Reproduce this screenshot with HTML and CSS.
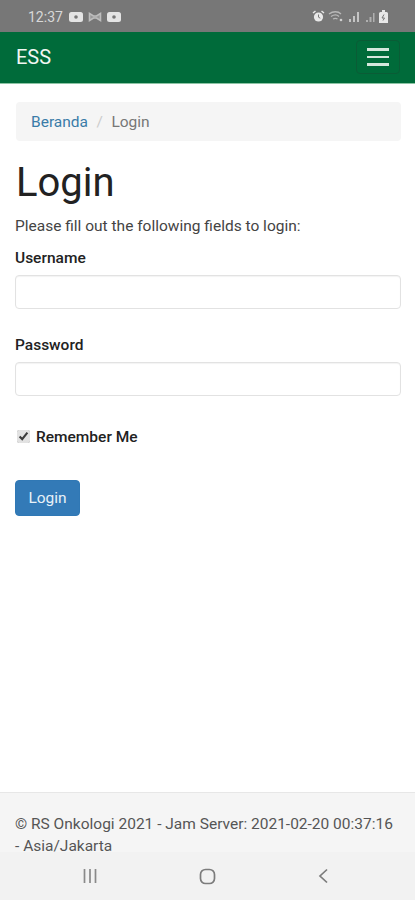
FILE: index.html
```html
<!DOCTYPE html>
<html lang="en">
<head>
    <meta charset="UTF-8">
    <meta name="viewport" content="width=device-width, initial-scale=1.0">
    <title>Login</title>
    <link rel="stylesheet" href="styles.css">
</head>
<body>

<div class="status-bar">
    <div class="status-left">
        <span class="status-time">12:37</span>
        <svg class="status-icon" width="14" height="10" viewBox="0 0 14 10"><rect width="14" height="10" rx="2.5" fill="#e4e4e4"/><circle cx="7" cy="5" r="1.8" fill="#777"/></svg>
        <svg class="status-icon" width="14" height="10" viewBox="0 0 14 10"><path d="M1.500 1.500v7l4-2.500h3l4 2.500v-7l-4 2.500h-3z" fill="#999" stroke="#bdbdbd" stroke-width="1.600"/></svg>
        <svg class="status-icon" width="14" height="10" viewBox="0 0 14 10"><rect width="14" height="10" rx="2.5" fill="#e4e4e4"/><circle cx="7" cy="5" r="1.8" fill="#777"/></svg>
    </div>
    <div class="status-right">
        <svg width="13" height="13" viewBox="0 0 13 13"><circle cx="6.5" cy="7" r="4.6" fill="#e8e8e8"/><path d="M6.5 4.500v2.700l1.800 1" fill="none" stroke="#777" stroke-width="1"/><path d="M1 3l2.500-2M12 3l-2.500-2" stroke="#e8e8e8" stroke-width="1.500"/></svg>
        <svg width="17" height="11" viewBox="0 0 17 11"><path d="M1 3c4-3 9-3 12 0M3 5.500c3-2 6-2 8 0M5 8c2-1 3-1 4.500 0" fill="none" stroke="#b9b9b9" stroke-width="1.300"/><circle cx="13" cy="9" r="1.300" fill="#cfcfcf"/></svg>
        <svg width="14" height="11" viewBox="0 0 14 11"><path d="M1 8h2v3H1zM5 5h2v6H5zM9 1h2v10H9z" fill="#c4c4c4"/></svg>
        <svg width="11" height="11" viewBox="0 0 11 11"><path d="M1 9h2v2H1zM4.500 6h2v5h-2zM8 2h1.500v9H8z" fill="#b0b0b0"/></svg>
        <svg width="9" height="13" viewBox="0 0 9 13"><path d="M3 0h3v2h1.500A1.500 1.500 0 0 1 9 3.500V13H0V3.500A1.500 1.500 0 0 1 1.500 2H3z" fill="#e8e8e8"/><path d="M5 4.500 3 8h2.500L4 10.500" fill="none" stroke="#777" stroke-width="1"/></svg>
    </div>
</div>

<nav class="navbar">
    <a class="navbar-brand" href="#">ESS</a>
    <button class="navbar-toggle" type="button" aria-label="Toggle navigation">
        <span class="icon-bar"></span>
        <span class="icon-bar"></span>
        <span class="icon-bar"></span>
    </button>
</nav>

<main class="container">
    <ul class="breadcrumb">
        <li><a href="#">Beranda</a></li>
        <li class="crumb-sep">/</li>
        <li class="crumb-active">Login</li>
    </ul>

    <h1>Login</h1>
    <p class="intro">Please fill out the following fields to login:</p>

    <form>
        <div class="form-group">
            <label for="username">Username</label>
            <input type="text" id="username" class="form-control">
        </div>
        <div class="form-group">
            <label for="password">Password</label>
            <input type="password" id="password" class="form-control">
        </div>
        <label class="check-label">
            <input type="checkbox" class="check-box" checked>
            Remember Me
        </label>
        <button type="button" class="btn-login">Login</button>
    </form>
</main>

<footer class="footer">
    <p>© RS Onkologi 2021 - Jam Server: 2021-02-20 00:37:16 - Asia/Jakarta</p>
</footer>

<div class="system-nav">
    <svg width="16" height="16" viewBox="0 0 16 16"><path d="M2.500 1v14M8 1v14M13.500 1v14" stroke="#8a8a8a" stroke-width="1.700" fill="none"/></svg>
    <svg width="17" height="17" viewBox="0 0 17 17"><rect x="1.500" y="1.500" width="14" height="14" rx="5" fill="none" stroke="#7c7c7c" stroke-width="1.700"/></svg>
    <svg width="12" height="16" viewBox="0 0 12 16"><path d="M10 1.500 3 8l7 6.500" fill="none" stroke="#7c7c7c" stroke-width="1.700"/></svg>
</div>

</body>
</html>
```

FILE: styles.css
```css
* {
    box-sizing: border-box;
}
body {
    margin: 0;
    height: 900px;
    display: flex;
    flex-direction: column;
    overflow: hidden;
    font-family: Roboto, "Liberation Sans", sans-serif;
    font-size: 15.5px;
    color: #333;
    background-color: #fff;
}
.status-bar {
    height: 32px;
    flex: none;
    display: flex;
    justify-content: space-between;
    align-items: center;
    padding: 1px 27px 0 28px;
    background-color: #777;
    color: #d8d8d8;
}
.status-left, .status-right {
    display: flex;
    align-items: center;
}
.status-left {
    gap: 5px;
}
.status-right {
    gap: 3px;
}
.status-time {
    font-size: 14px;
    margin-right: 1px;
}
.navbar {
    height: 52px;
    flex: none;
    display: flex;
    justify-content: space-between;
    align-items: center;
    padding: 0 15px 1px 16px;
    background-color: #006b3a;
    border-bottom: 1px solid #8cc4a4;
}
.navbar-brand {
    color: #f0f7f2;
    font-size: 20px;
    text-decoration: none;
}
.navbar-toggle {
    width: 44px;
    height: 34px;
    display: flex;
    flex-direction: column;
    justify-content: center;
    align-items: center;
    gap: 5px;
    padding: 0;
    background: none;
    border: 1px solid #0a5c36;
    border-radius: 4px;
}
.icon-bar {
    width: 22px;
    height: 2.5px;
    background-color: #d5e7dc;
}
.container {
    flex: 1;
    padding: 18px 14px 0 15px;
}
.breadcrumb {
    height: 39px;
    display: flex;
    align-items: center;
    margin: 0 0 0 1px;
    padding: 0 15px;
    list-style: none;
    background-color: #f5f5f5;
    border-radius: 4px;
}
.breadcrumb a {
    color: #3a7ca8;
    text-decoration: none;
}
.crumb-sep {
    padding: 0 8.5px;
    color: #ccc;
}
.crumb-active {
    color: #777;
}
h1 {
    margin: 20px 0 0 1px;
    font-size: 40px;
    font-weight: 400;
    line-height: 44px;
    color: #222;
}
.intro {
    margin: 11px 0 0;
    line-height: 20px;
    color: #444;
}
form {
    margin-top: 12px;
}
.form-group {
    margin-bottom: 26px;
}
label {
    display: block;
    font-weight: 500;
    font-size: 15.5px;
    line-height: 20px;
    margin-bottom: 7px;
    color: #222;
}
.form-control {
    display: block;
    width: 100%;
    height: 34px;
    padding: 6px 12px;
    background-color: #fff;
    border: 1px solid #e2e2e2;
    border-radius: 4px;
    box-shadow: inset 0 1px 1px rgba(0, 0, 0, 0.05);
}
.check-label {
    display: flex;
    align-items: center;
    gap: 6px;
    margin: 31px 0 33px 2px;
}
.check-box {
    width: 13px;
    height: 13px;
    margin: 0 0 2px;
    accent-color: #e2e2e2;
}
.btn-login {
    display: block;
    width: 65px;
    height: 36px;
    padding: 0;
    font-family: inherit;
    font-size: 15.5px;
    color: #e8f1f8;
    background-color: #337ab7;
    border: 1px solid #3078b5;
    border-radius: 4px;
}
.footer {
    height: 60px;
    flex: none;
    padding: 20px 15px 0;
    background-color: #f5f5f5;
    border-top: 1px solid #e7e7e7;
}
.footer p {
    margin: 0;
    line-height: 22px;
    color: #555;
}
.system-nav {
    height: 48px;
    flex: none;
    display: flex;
    justify-content: space-between;
    align-items: center;
    padding: 0 86px 0 82px;
    background-color: #f2f2f2;
}
```
